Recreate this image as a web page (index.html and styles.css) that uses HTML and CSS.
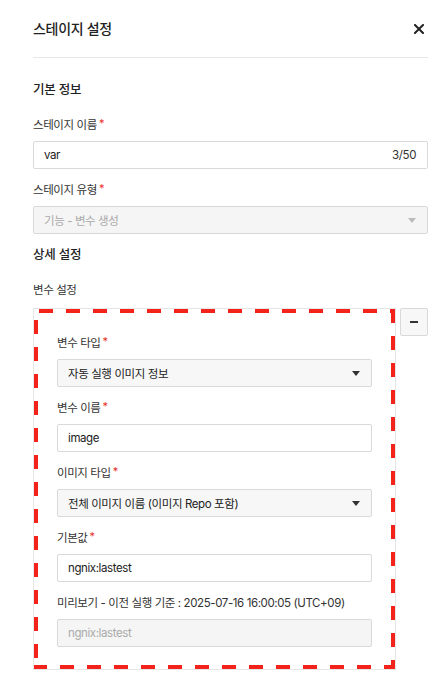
FILE: index.html
```
<!DOCTYPE html>
<html lang="ko">
<head>
<meta charset="utf-8">
<title>스테이지 설정</title>
<link rel="stylesheet" href="styles.css">
</head>
<body>
<div class="panel">
  <header class="header">
    <h2 class="title">스테이지 설정</h2>
    <button class="close" aria-label="닫기">
      <svg width="10" height="10" viewBox="0 0 10 10"><path d="M1 1L9 9M9 1L1 9" stroke="#222" stroke-width="2" stroke-linecap="square"/></svg>
    </button>
  </header>

  <section class="section">
    <h3 class="section-title">기본 정보</h3>
    <div class="field">
      <label class="label">스테이지 이름<span class="req">*</span></label>
      <div class="input">
        <span class="value">var</span>
        <span class="count">3/50</span>
      </div>
    </div>
    <div class="field">
      <label class="label">스테이지 유형<span class="req">*</span></label>
      <div class="input select disabled">
        <span class="value">기능 - 변수 생성</span>
        <span class="arrow"></span>
      </div>
    </div>
  </section>

  <section class="section detail">
    <h3 class="section-title">상세 설정</h3>
    <div class="label sub">변수 설정</div>
    <div class="var-row">
      <div class="var-box">
        <div class="var-inner">
          <div class="field">
            <label class="label">변수 타입<span class="req">*</span></label>
            <div class="input select">
              <span class="value">자동 실행 이미지 정보</span>
              <span class="arrow"></span>
            </div>
          </div>
          <div class="field">
            <label class="label">변수 이름<span class="req">*</span></label>
            <div class="input">
              <span class="value">image</span>
            </div>
          </div>
          <div class="field">
            <label class="label">이미지 타입<span class="req">*</span></label>
            <div class="input select">
              <span class="value">전체 이미지 이름 (이미지 Repo 포함)</span>
              <span class="arrow"></span>
            </div>
          </div>
          <div class="field">
            <label class="label">기본값<span class="req">*</span></label>
            <div class="input">
              <span class="value">ngnix:lastest</span>
            </div>
          </div>
          <div class="field">
            <label class="label">미리보기 - 이전 실행 기준 : 2025-07-16 16:00:05 (UTC+09)</label>
            <div class="input disabled">
              <span class="value">ngnix:lastest</span>
            </div>
          </div>
        </div>
      </div>
      <button class="minus" aria-label="삭제"><span class="minus-bar"></span></button>
    </div>
  </section>
</div>
</body>
</html>
```
FILE: styles.css
```
* { box-sizing: border-box; }
html, body { margin: 0; padding: 0; background: #fff; }
body {
  font-family: Inter, "Noto Sans CJK KR", sans-serif;
  color: #222;
  font-size: 11.5px;
  letter-spacing: -0.4px;
}
.panel {
  padding: 0 17px 0 33px;
}
.header {
  height: 58px;
  display: flex;
  align-items: center;
  justify-content: space-between;
  border-bottom: 1px solid #e8e8e8;
}
.title {
  margin: 0;
  font-size: 14px;
  font-weight: 500;
  letter-spacing: -0.3px;
  line-height: 22px;
  height: 22px;
  color: #222;
}
.close {
  width: 18px;
  height: 18px;
  padding: 0;
  border: 0;
  background: none;
  display: flex;
  align-items: center;
  justify-content: center;
}
.section-title {
  margin: 0 0 14px;
  font-size: 12.5px;
  font-weight: 500;
  letter-spacing: -0.2px;
  line-height: 22px;
  height: 22px;
  color: #222;
}
.section { margin-top: 21px; }
.section.detail { margin-top: 10px; }
.field { margin-bottom: 11px; }
.field:last-child { margin-bottom: 0; }
.label {
  display: block;
  height: 20px;
  font-size: 11.5px;
  line-height: 20px;
  color: #333;
  margin-bottom: 6px;
  white-space: nowrap;
}
.label.sub { margin-bottom: 8px; }
.req {
  color: #e8302a;
  margin-left: 2px;
  font-size: 11px;
  line-height: 10px;
  vertical-align: 2px;
}
.input {
  height: 28px;
  border: 1px solid #d9d9d9;
  border-radius: 2px;
  background: #fff;
  display: flex;
  align-items: center;
  justify-content: space-between;
  padding: 0 11px 0 10px;
  font-size: 11.5px;
  color: #222;
}
.input.select { background: #f7f7f7; padding-right: 11px; }
.input.disabled { background: #f5f5f5; color: #aaa; }
.count { color: #333; }
.arrow {
  width: 0;
  height: 0;
  border-left: 4px solid transparent;
  border-right: 4px solid transparent;
  border-top: 5px solid #333;
}
.input.disabled .arrow { border-top-color: #bbb; }
.var-row {
  display: flex;
  gap: 4px;
  align-items: flex-start;
}
.var-box {
  flex: 1;
  border: 1px solid #e6e6e6;
}
.var-inner {
  padding: 24px 23px 22px;
  background:
    linear-gradient(90deg, #f3231c 14.5px, transparent 14.5px) 5px 0 / 27px 4px repeat-x,
    linear-gradient(90deg, #f3231c 14.5px, transparent 14.5px) -1px 100% / 27px 4px repeat-x,
    linear-gradient(180deg, #f3231c 14.5px, transparent 14.5px) 0 11px / 4px 27px repeat-y,
    linear-gradient(180deg, #f3231c 14.5px, transparent 14.5px) 100% 0 / 4px 27px repeat-y;
}
.minus {
  width: 28px;
  height: 28px;
  border: 1px solid #d9d9d9;
  border-radius: 2px;
  background: #f7f7f7;
  padding: 0;
  display: flex;
  align-items: center;
  justify-content: center;
}
.minus-bar {
  width: 8px;
  height: 2px;
  background: #333;
}
```
